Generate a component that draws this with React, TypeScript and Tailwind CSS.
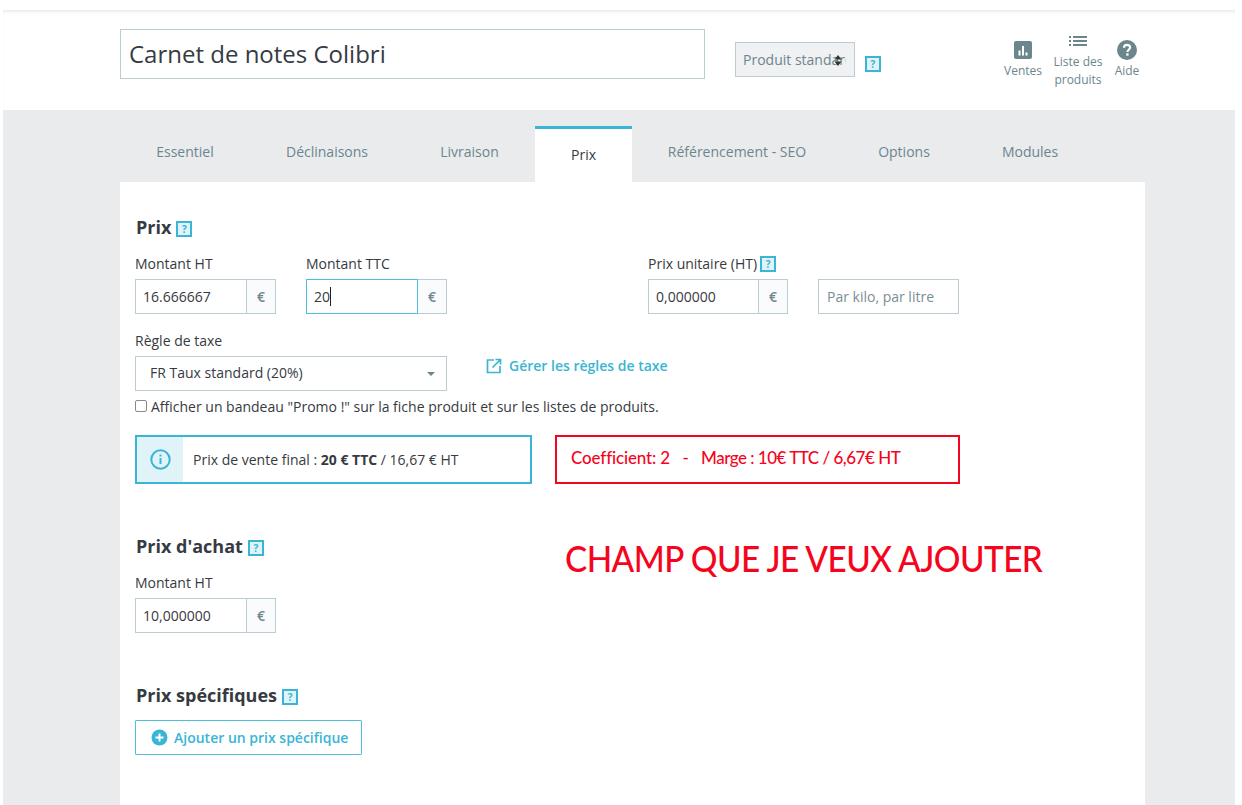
import React from "react";

const Help = ({ className = "" }: { className?: string }) => (
  <span className={"inline-flex w-4 h-4 shrink-0 items-center justify-center border-2 border-[#3ab5d3] bg-[#e0f3f8] text-[#3ab5d3] text-[10px] font-bold leading-none " + className}>?</span>
);

const Money = ({ value, focus = false, narrow = false }: { value: string; focus?: boolean; narrow?: boolean }) => (
  <div className={"flex h-[35px] text-[14px] " + (narrow ? "w-[140px]" : "w-[141px]")}>
    <div className={"relative flex items-center pl-[7px] border text-[#363a41] " + (narrow ? "w-[111px] " : "w-[112px] ") + (focus ? "border-[#4cc0dc]" : "border-[#bbcdd2]")}>
      {value}
      {focus && <span className="w-px h-[19px] bg-[#222]" />}
    </div>
    <div className="flex items-center justify-center flex-1 border border-l-0 border-[#bbcdd2] bg-[#fafbfc] text-[#6c868e] font-semibold">€</div>
  </div>
);

const Heading = ({ children }: { children: React.ReactNode }) => (
  <div className="flex items-center gap-[5px] h-[22px] pl-px text-[#363a41] text-[18px] font-bold leading-none">
    <span className="-mt-[2px]">{children}</span>
    <Help className="mt-[2px]" />
  </div>
);

const Label = ({ children }: { children: React.ReactNode }) => (
  <div className="h-5 mb-[5px] text-[14px] leading-5 text-[#363a41] flex items-center gap-[3px]">{children}</div>
);

export default function App() {
  return (
    <div className="h-[805px] overflow-hidden bg-white pt-[10px] pl-[3px] pr-[7px] font-['Open_Sans',sans-serif]">
      <header className="h-[100px] flex shadow-[inset_0_3px_3px_-1px_rgba(0,0,0,0.08)] pl-[117px] pt-[19px]">
        <div className="w-[585px] h-[50px] border border-[#bbcdd2] flex items-center pl-2 text-[24px] text-[#363a41]">Carnet de notes Colibri</div>
        <div className="relative ml-[30px] mt-[13px] w-[120px] h-[35px] border border-[#bbcdd2] bg-[#eff1f2] flex items-center pl-[7px] text-[14px] text-[#6c868e] whitespace-nowrap">
          <span className="w-[103px] overflow-hidden">Produit standard</span>
          <svg width="8" height="11" viewBox="0 0 8 11" className="absolute right-[12px] top-[12px]">
            <path d="M4 0l3.500 4.500H.5zM4 11L.5 6.500h7z" fill="#333" />
          </svg>
        </div>
        <Help className="ml-[10px] mt-[27px]" />
        <div className="ml-[123px] flex text-[12px] leading-[18px] text-[#6c868e]">
          <div className="w-[38px] flex flex-col items-center pt-[12px]">
            <svg width="18" height="18" viewBox="0 0 18 18" className="shrink-0">
              <rect width="18" height="18" rx="2" fill="#6c868e" />
              <path d="M4.500 9.500h2v5h-2zM8 5h2v9.500H8zM11.500 11.500h2v3h-2z" fill="#fff" />
            </svg>
            <span className="mt-[3px]">Ventes</span>
          </div>
          <div className="ml-[11px] w-[50px] flex flex-col items-center pt-[6px] text-center">
            <svg width="18" height="12" viewBox="0 0 18 12" className="shrink-0">
              <path d="M0 1h2v2H0zM0 5h2v2H0zM0 9h2v2H0zM4 1h14v2H4zM4 5h14v2H4zM4 9h14v2H4z" fill="#6c868e" />
            </svg>
            <span className="mt-[6px]">Liste des produits</span>
          </div>
          <div className="ml-[11px] w-[26px] flex flex-col items-center pt-[11px]">
            <svg width="20" height="20" viewBox="0 0 18 18" className="shrink-0">
              <circle cx="9" cy="9" r="9" fill="#6c868e" />
              <path d="M6.300 7c0-1.600 1.100-2.600 2.700-2.600S11.800 5.400 11.800 6.800c0 1.900-2.400 2-2.400 3.900" fill="none" stroke="#fff" strokeWidth="1.900" />
              <rect x="8.300" y="12" width="2.100" height="2.100" fill="#fff" />
            </svg>
            <span className="mt-[2px]">Aide</span>
          </div>
        </div>
      </header>

      <main className="h-[695px] bg-[#e9ebed] pl-[117px] pr-[90px] pt-4">
        <nav className="h-[56px] flex text-[14px] text-[#6c868e]">
          {[
            ["Essentiel", "w-[130px]"],
            ["Déclinaisons", "w-[154px]"],
            ["Livraison", "w-[131px]"],
          ].map(([t, w]) => (
            <div key={t} className={w + " flex items-center justify-center pb-[6px]"}>{t}</div>
          ))}
          <div className="w-[97px] bg-white border-t-[3px] border-[#3ab5d3] flex items-center justify-center text-[#363a41] pb-[3px]">Prix</div>
          {[
            ["Référencement - SEO", "w-[210px]"],
            ["Options", "w-[124px]"],
            ["Modules", "w-[128px]"],
          ].map(([t, w]) => (
            <div key={t} className={w + " flex items-center justify-center pb-[6px]"}>{t}</div>
          ))}
        </nav>

        <section className="h-[640px] bg-white pl-[15px] pt-[35px] text-[#363a41]">
          <Heading>Prix</Heading>
          <div className="flex mt-[15px]">
            <div>
              <Label>Montant HT</Label>
              <Money value="16.666667" />
            </div>
            <div className="ml-[30px]">
              <Label>Montant TTC</Label>
              <Money value="20" focus />
            </div>
            <div className="ml-[201px]">
              <Label>
                Prix unitaire (HT) <Help />
              </Label>
              <Money value="0,000000" narrow />
            </div>
            <div className="ml-[30px] self-end w-[141px] h-[35px] border border-[#bbcdd2] flex items-center pl-2 text-[14px] text-[#7a8e95]">Par kilo, par litre</div>
          </div>

          <div className="flex mt-[17px]">
            <div className="w-[312px]">
              <Label>Règle de taxe</Label>
              <div className="relative h-[35px] border border-[#bbcdd2] flex items-center pl-[14px] pb-[2px] text-[14px]">
                FR Taux standard (20%)
                <span className="absolute right-[11px] top-[15px] border-x-[4px] border-t-[4px] border-x-transparent border-t-[#6c868e]" />
              </div>
            </div>
            <div className="ml-[38px] mt-[24px] flex items-center h-5 text-[14px] font-semibold text-[#3ab5d3]">
              <svg width="16" height="16" viewBox="0 0 16 16" fill="none" stroke="#3ab5d3" strokeWidth="1.700" className="ml-px mr-[7px] mt-[2px]">
                <path d="M8 2H1.500v12.500H14V8M6.500 9.500L14 2M9.500 1.500h5v5" />
              </svg>
              Gérer les règles de taxe
            </div>
          </div>

          <div className="flex items-center h-5 mt-[5px] text-[14px] text-[#363a41]">
            <span className="w-3 h-3 rounded-[2px] border border-[#8a8a8a] mr-[4px]" />
            Afficher un bandeau "Promo !" sur la fiche produit et sur les listes de produits.
          </div>

          <div className="flex mt-[19px]">
            <div className="w-[397px] h-[49px] border-2 border-[#3ab5d3] flex items-center text-[14px]">
              <div className="w-[46px] h-full bg-[#e0f3f8] flex items-center justify-center">
                <svg width="21" height="21" viewBox="0 0 21 21" fill="none" stroke="#3ab5d3" strokeWidth="2">
                  <circle cx="10.500" cy="10.500" r="9.200" />
                  <path d="M10.500 9v6M10.500 5.500v2" />
                </svg>
              </div>
              <span className="ml-[10px]">Prix de vente final : <b>20 € TTC</b> / 16,67 € HT</span>
            </div>
            <div className="ml-[23px] w-[405px] h-[49px] border-2 border-[#f5051d] flex items-center pl-[14px] pb-[3px] text-[#f5051d] text-[17px] font-['Lato',sans-serif] font-medium whitespace-pre">
              <span className="tracking-[-0.15px]">Coefficient: 2   -   </span>
              <span className="tracking-[-0.5px]">Marge : 10€ TTC / 6,67€ HT</span>
            </div>
          </div>

          <div className="flex mt-[52px]">
            <div className="w-[430px]">
              <Heading>Prix d'achat</Heading>
              <div className="mt-[15px]">
                <Label>Montant HT</Label>
                <Money value="10,000000" />
              </div>
            </div>
            <div className="text-[36px] leading-[44px] text-[#f5051d] font-['Lato',sans-serif] font-medium whitespace-nowrap tracking-[-0.6px] origin-left scale-x-[0.925]">CHAMP QUE JE VEUX AJOUTER</div>
          </div>

          <div className="mt-[52px]">
            <Heading>Prix spécifiques</Heading>
          </div>
          <div className="mt-[13px] w-[227px] h-[35px] border border-[#4cc0dc] rounded-[1px] flex items-center pl-[15px] gap-[6px] text-[14px] font-semibold text-[#3ab5d3]">
            <svg width="17" height="17" viewBox="0 0 17 17">
              <circle cx="8.500" cy="8.500" r="8" fill="#3ab5d3" />
              <path d="M8.500 4.500v8M4.500 8.500h8" stroke="#fff" strokeWidth="2" />
            </svg>
            Ajouter un prix spécifique
          </div>
        </section>
      </main>
    </div>
  );
}
